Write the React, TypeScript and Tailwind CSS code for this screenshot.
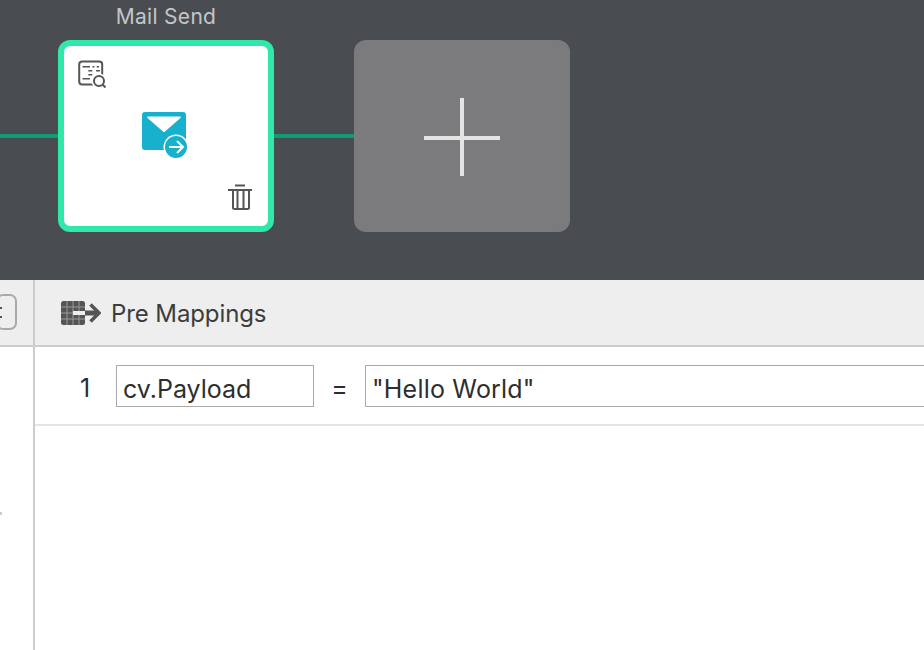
import React from 'react';

const MailSendIcon = () => (
  <svg width="48" height="48" viewBox="0 0 48 48">
    <rect x="0" y="0" width="44" height="38" rx="3" fill="#17b0cd" />
    <path d="M6 4.5H38Q39.5 4.5 38.5 6L23 19.5Q22 20.5 21 19.5L5.5 6Q4.5 4.5 6 4.5Z" fill="#fff" />
    <circle cx="34" cy="35" r="12.5" fill="#fff" />
    <circle cx="34" cy="35" r="11" fill="#17b0cd" />
    <path d="M27 35H40M35 29L41 35L35 41" fill="none" stroke="#fff" strokeWidth="2" />
  </svg>
);

const InspectIcon = () => (
  <svg width="28" height="28" viewBox="0 0 28 28" fill="none" stroke="#555" strokeWidth="2">
    <rect x="1.2" y="1.5" width="23" height="23" rx="3" />
    <path d="M4.5 6.7H12M14.5 6.7H16.5M18.7 6.7H21M10.3 10.7H14.3M18 10.7H22M10.3 14.7H14.3M4.5 18.7H12" strokeWidth="1.6" />
    <circle cx="21" cy="21" r="6.5" fill="#fff" stroke="#fff" />
    <circle cx="21" cy="21" r="5" fill="#fff" />
    <path d="M24.5 24.5L27.5 27.5" />
  </svg>
);

const TrashIcon = () => (
  <svg width="24" height="26" viewBox="0 0 24 26" fill="none" stroke="#555" strokeWidth="2">
    <path d="M7 1.5H17M0 6H24" />
    <path d="M5 6V23.5Q5 25 6.5 25H19.5Q21 25 21 23.5V6" />
    <path d="M9.5 6V25M15.5 6V25" />
  </svg>
);

const GridArrowIcon = () => (
  <svg width="40" height="24" viewBox="0 0 40 24">
    <rect x="0" y="0" width="24" height="24" rx="2.5" fill="#555" />
    <path d="M6 0V24M12 0V24M18 0V24M0 6H24M0 12H24M0 18H24" stroke="#9a9a9a" strokeWidth="1" />
    <rect x="12" y="10" width="12" height="4" fill="#eee" />
    <path d="M24 12H38" stroke="#555" strokeWidth="5" />
    <path d="M29.5 3.5L38 12L29.5 20.5" fill="none" stroke="#555" strokeWidth="3.5" />
  </svg>
);

const App: React.FC = () => {
  return (
    <div className="w-[924px] h-[650px] overflow-hidden bg-white font-['Inter',sans-serif]">
      {/* Flow canvas */}
      <div className="h-[280px] bg-[#494c50] flex items-start pt-[5px]">
        <div className="w-[58px] h-1 mt-[129px] bg-[#0e9c76]" />
        <div className="w-[216px] flex flex-col">
          <div className="h-[35px] text-center text-[21px] tracking-[0.3px] leading-[24px] text-[#c4c6c8]">Mail Send</div>
          <div className="h-[192px] rounded-[12px] border-[6px] border-[#30e8a8] bg-white grid grid-rows-[auto_1fr_auto] pt-[14px] pb-[16px] px-[14px]">
            <div className="flex justify-start"><InspectIcon /></div>
            <div className="flex items-center justify-center"><MailSendIcon /></div>
            <div className="flex justify-end pr-[2px]"><TrashIcon /></div>
          </div>
        </div>
        <div className="w-[80px] h-1 mt-[129px] bg-[#0e9c76]" />
        <div className="w-[216px] h-[192px] mt-[35px] rounded-[12px] bg-[#7b7b7d] flex items-center justify-center">
          <svg className="mt-[2px]" width="76" height="78" viewBox="0 0 76 78">
            <path d="M0 40H76M38 0V78" stroke="#e4e4e4" strokeWidth="4" />
          </svg>
        </div>
      </div>

      <div className="flex h-[370px]">
        {/* Collapsed side panel */}
        <div className="w-[35px] shrink-0 border-r-2 border-[#cccccc]">
          <div className="h-[67px] bg-[#eeeeee] border-b-2 border-[#cccccc] pt-[14px]">
            <div className="w-[21px] h-[36px] -ml-1 rounded-[7px] border-2 border-[#aaaaaa] flex flex-col justify-center gap-[7px]">
              <span className="ml-[2px] w-[2px] h-[2px] bg-[#555]" />
              <span className="ml-[2px] w-[2px] h-[2px] bg-[#555]" />
            </div>
          </div>
          <div className="w-[2px] h-[3px] mt-[165px] bg-[#cccccc]" />
        </div>

        {/* Pre mappings panel */}
        <div className="flex-1 min-w-0">
          <div className="h-[67px] bg-[#eeeeee] border-b-2 border-[#cccccc] flex items-center pl-[26px] gap-[10px]">
            <GridArrowIcon />
            <span className="text-[24px] tracking-[-0.1px] text-[#3c3c3c] mt-[2px]">Pre Mappings</span>
          </div>
          <div className="h-[79px] border-b-2 border-[#e4e4e4] flex items-start pt-[18px] text-[25px] text-[#2e2e2e]">
            <span className="w-[56px] pl-[45px] leading-[46px]">1</span>
            <div className="w-[198px] h-[42px] ml-[25px] border border-[#aaaaaa] px-[6px] leading-[46px] shrink-0">cv.Payload</div>
            <span className="w-[51px] text-center shrink-0 leading-[46px]">=</span>
            <div className="flex-1 h-[42px] border border-r-0 border-[#aaaaaa] px-[6px] leading-[46px] tracking-[0.2px] -mr-[2px]">"Hello World"</div>
          </div>
        </div>
      </div>
    </div>
  );
};

export default App;
